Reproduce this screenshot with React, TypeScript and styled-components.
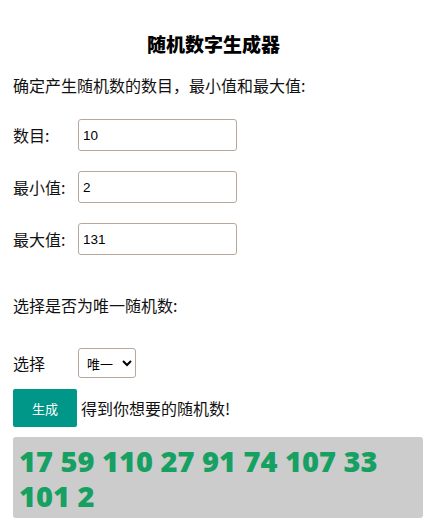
import React from "react";
import styled, { createGlobalStyle } from "styled-components";

const Global = createGlobalStyle`
  html, body { margin: 0; padding: 0; background: #fff; }
  body { font-family: "Noto Sans CJK SC", "Noto Sans", sans-serif; color: #111; }
`;

const Page = styled.div`
  width: 430px;
  padding: 0 7px 0 13px;
  box-sizing: border-box;
  display: flex;
  flex-direction: column;
`;

const Title = styled.h1`
  margin: 31px 0 0 0;
  font-size: 19px;
  font-weight: 800;
  line-height: 26px;
  text-align: center;
  padding-right: 9px;
  color: #000;
`;

const Para = styled.p<{ $top: number }>`
  margin: ${(p) => p.$top}px 0 0 0;
  font-size: 16px;
  line-height: 22px;
`;

const Row = styled.div<{ $top: number }>`
  display: grid;
  grid-template-columns: 65px auto;
  align-items: center;
  margin-top: ${(p) => p.$top}px;
  font-size: 16px;
`;

const TextInput = styled.input`
  width: 159px;
  height: 32px;
  box-sizing: border-box;
  border: 1px solid #b8a89c;
  border-radius: 3px;
  padding: 0 4px;
  font-family: "Liberation Sans", Arial, sans-serif;
  font-size: 13.5px;
  color: #000;
  outline: none;
`;

const Select = styled.select`
  width: 58px;
  height: 30px;
  box-sizing: border-box;
  border: 1px solid #b8a89c;
  border-radius: 3px;
  background: #fff;
  font-family: "Noto Sans CJK SC", sans-serif;
  font-size: 13px;
  color: #000;
  padding: 0 2px 0 4px;
`;

const Action = styled.div`
  display: flex;
  align-items: center;
  gap: 4px;
  margin-top: 11px;
  font-size: 16px;
`;

const Button = styled.button`
  width: 64px;
  height: 38px;
  border: none;
  border-radius: 2px;
  background: #009688;
  color: #fff;
  font-family: "Noto Sans CJK SC", sans-serif;
  font-size: 13px;
  cursor: pointer;
`;

const Result = styled.div`
  margin-top: 10px;
  background: #cccccc;
  border-radius: 3px;
  padding: 6px 6px 5px 6px;
  font-family: "Open Sans", "Noto Sans", sans-serif;
  font-weight: 800;
  font-size: 29px;
  line-height: 35px;
  color: #16a062;
`;

export default function App() {
  return (
    <>
      <Global />
      <Page>
        <Title>随机数字生成器</Title>
        <Para $top={17}>确定产生随机数的数目，最小值和最大值:</Para>
        <Row $top={23}>
          <span>数目:</span>
          <TextInput defaultValue="10" />
        </Row>
        <Row $top={20}>
          <span>最小值:</span>
          <TextInput defaultValue="2" />
        </Row>
        <Row $top={20}>
          <span>最大值:</span>
          <TextInput defaultValue="131" />
        </Row>
        <Para $top={39}>选择是否为唯一随机数:</Para>
        <Row $top={32}>
          <span>选择</span>
          <Select defaultValue="unique">
            <option value="unique">唯一</option>
            <option value="repeat">可重复</option>
          </Select>
        </Row>
        <Action>
          <Button>生成</Button>
          <span>得到你想要的随机数!</span>
        </Action>
        <Result>17 59 110 27 91 74 107 33 101 2</Result>
      </Page>
    </>
  );
}
